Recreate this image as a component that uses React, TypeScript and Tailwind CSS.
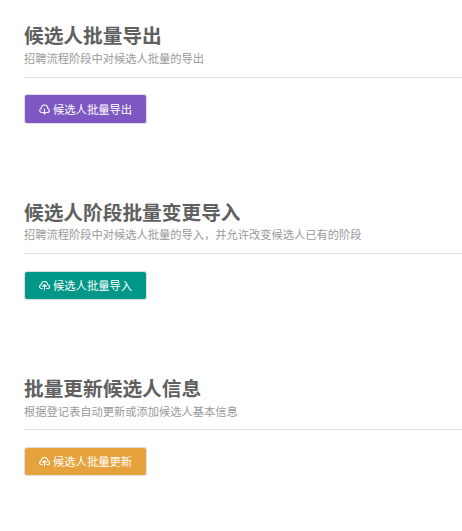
type IconName = "download" | "upload";

interface Section {
  title: string;
  description: string;
  action: string;
  icon: IconName;
  color: string;
}

const sections: Section[] = [
  {
    title: "候选人批量导出",
    description: "招聘流程阶段中对候选人批量的导出",
    action: "候选人批量导出",
    icon: "download",
    color: "bg-[#7e57c2]",
  },
  {
    title: "候选人阶段批量变更导入",
    description: "招聘流程阶段中对候选人批量的导入，并允许改变候选人已有的阶段",
    action: "候选人批量导入",
    icon: "upload",
    color: "bg-[#009688]",
  },
  {
    title: "批量更新候选人信息",
    description: "根据登记表自动更新或添加候选人基本信息",
    action: "候选人批量更新",
    icon: "upload",
    color: "bg-[#e6a23c]",
  },
];

const CloudIcon = ({ name }: { name: IconName }) => (
  <svg
    viewBox="0 0 12 11"
    className="h-[11px] w-3 shrink-0"
    fill="none"
    stroke="currentColor"
    strokeWidth="1.1"
    strokeLinecap="round"
    strokeLinejoin="round"
  >
    {name === "download" ? (
      <>
        <path d="M3.6 8.5H2.8C1.5 8.5.7 7.6.7 6.5c0-1 .6-1.8 1.5-2.1C2.3 2.3 3.7 1 5.5 1s3.2 1.3 3.3 3.4c.9.3 1.5 1.1 1.5 2.1 0 1.1-.8 2-2.1 2h-.8" />
        <path d="M5.5 5v4.6M4.3 8.6l1.2 1.2 1.2-1.2" />
      </>
    ) : (
      <>
        <path d="M3.3 8.5h-.8C1.3 8.5.6 7.7.6 6.7c0-1 .7-1.7 1.7-1.9C2.4 3 3.8 1.5 5.5 1.5S8.6 3 8.7 4.8c1.1.2 1.9.9 1.9 1.9s-.8 1.8-2.1 1.8h-.8" />
        <path d="M5.5 9.7V4.8M3.7 6.5l1.8-1.8 1.8 1.8" />
      </>
    )}
  </svg>
);

const ImportSection = ({ title, description, action, icon, color }: Section) => (
  <section className="h-[176.3px]">
    <header className="h-[55.4px] border-b border-[#dcdfe6]">
      <h2 className="text-[19.7px] leading-[25px] font-bold whitespace-nowrap text-[#606060]">
        {title}
      </h2>
      <p className="mt-[0.8px] text-[11.25px] leading-[20px] whitespace-nowrap text-[#999]">
        {description}
      </p>
    </header>
    <button
      className={`mt-[16.7px] flex h-[29.3px] w-[123px] items-center gap-[2px] rounded-[3px] border border-[#dcdfe6] pl-[14px] text-[11.3px] whitespace-nowrap text-white ${color}`}
    >
      <CloudIcon name={icon} />
      <span>{action}</span>
    </button>
  </section>
);

export default function App() {
  return (
    <main className="h-[531px] overflow-hidden bg-white pt-[22.3px] pl-6 font-['Noto_Sans_CJK_SC',sans-serif]">
      {sections.map((section) => (
        <ImportSection key={section.title} {...section} />
      ))}
    </main>
  );
}
